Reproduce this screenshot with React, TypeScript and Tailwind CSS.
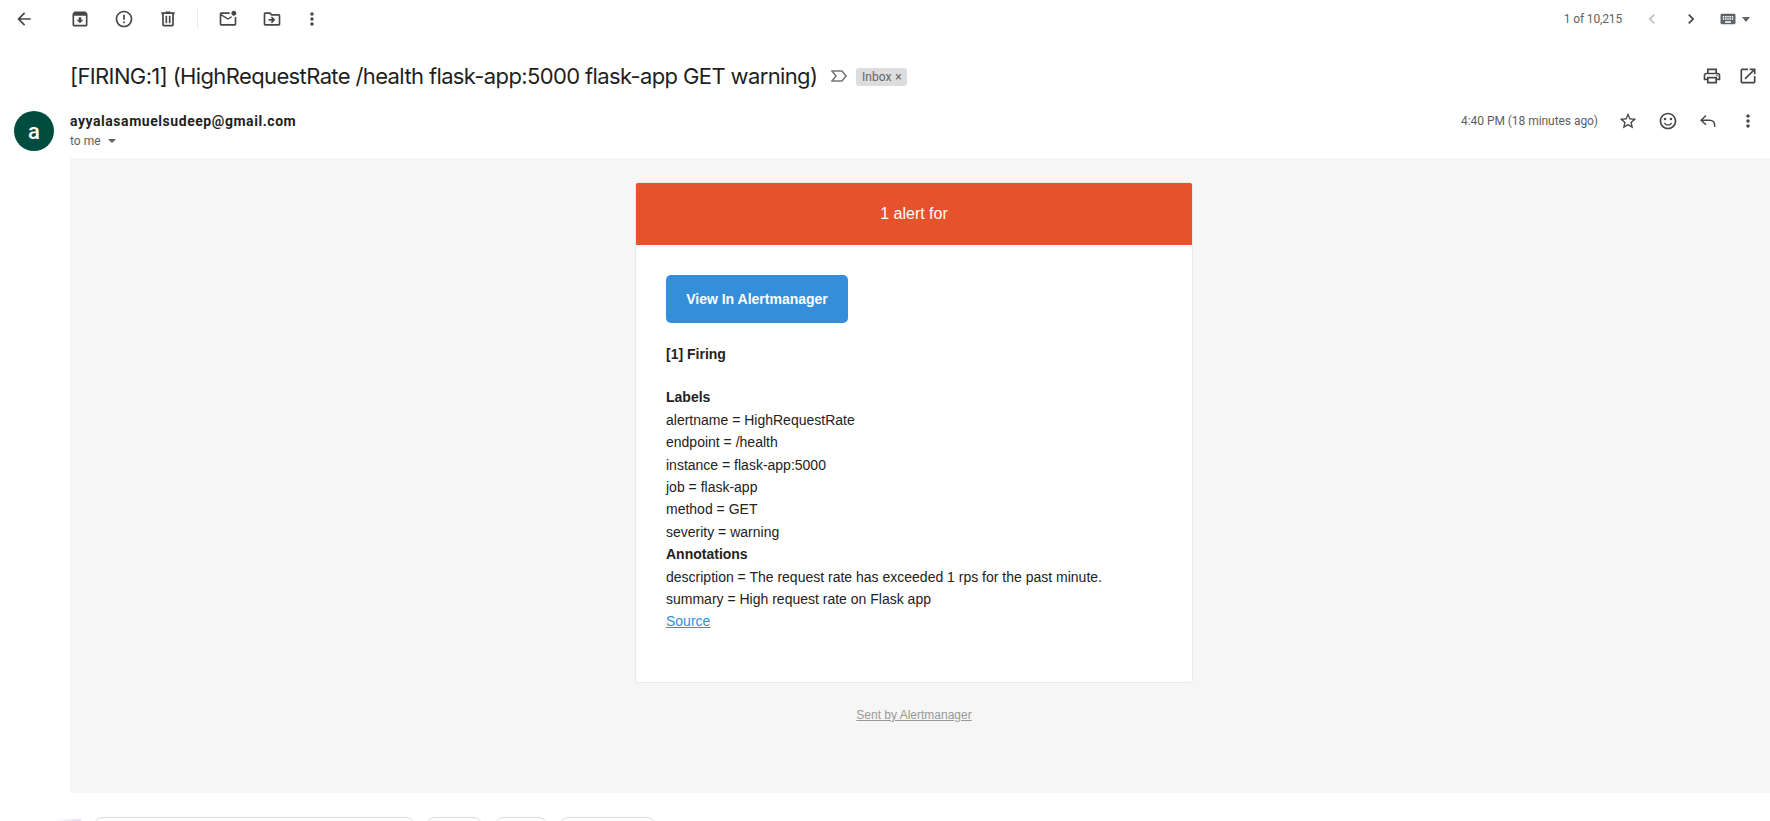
import {
  MdArrowBack,
  MdChevronLeft,
  MdChevronRight,
  MdErrorOutline,
  MdKeyboard,
  MdMoreVert,
  MdOpenInNew,
  MdOutlineDriveFileMove,
  MdOutlineMarkEmailUnread,
  MdOutlinePrint,
  MdOutlineSentimentSatisfied,
  MdStarBorder,
} from "react-icons/md";

const ArchiveIcon = () => (
  <svg viewBox="0 0 24 24" className="h-5 w-5" fill="currentColor">
    <path d="M20.54 5.23l-1.39-1.68C18.88 3.21 18.47 3 18 3H6c-.47 0-.88.21-1.16.55L3.46 5.23C3.17 5.57 3 6.02 3 6.5V19c0 1.1.9 2 2 2h14c1.1 0 2-.9 2-2V6.5c0-.48-.17-.93-.46-1.27zM5 19V8h14v11H5zm8.45-9h-2.9v3H8l4 4 4-4h-2.55z" />
  </svg>
);

const TrashIcon = () => (
  <svg viewBox="0 0 24 24" className="h-5 w-5" fill="currentColor">
    <path d="M15 4V3H9v1H4v2h1v13c0 1.1.9 2 2 2h10c1.1 0 2-.9 2-2V6h1V4h-5zm2 15H7V6h10v13z" />
    <path d="M9 8h2v9H9zm4 0h2v9h-2z" />
  </svg>
);

const ReplyIcon = () => (
  <svg viewBox="0 0 24 24" className="h-5 w-5" fill="none" stroke="currentColor" strokeWidth="1.8">
    <path d="M9.5 5.5 3.8 11l5.7 5.5" />
    <path d="M4 11h10c3.5 0 6 2.5 6 6v2" />
  </svg>
);

const ImportanceIcon = () => (
  <svg viewBox="0 0 16 14" className="h-[14px] w-4" fill="none" stroke="#757575" strokeWidth="1.6">
    <path d="M1 2h10l4 5-4 5H1l4-5z" />
  </svg>
);

const ToolbarButton = ({ children }: { children: React.ReactNode }) => (
  <div className="flex w-11 items-center justify-center text-[#444746]">{children}</div>
);

const labels = [
  "alertname = HighRequestRate",
  "endpoint = /health",
  "instance = flask-app:5000",
  "job = flask-app",
  "method = GET",
  "severity = warning",
];

const annotations = [
  "description = The request rate has exceeded 1 rps for the past minute.",
  "summary = High request rate on Flask app",
];

const App = () => {
  return (
    <div className="h-[821px] w-[1770px] overflow-hidden bg-white font-['Roboto',sans-serif] text-[#1f1f1f]">
      {/* Toolbar */}
      <div className="flex h-[38px] items-center">
        <div className="flex w-12 items-center justify-center text-[#444746]">
          <MdArrowBack className="h-5 w-5" />
        </div>
        <div className="ml-[10px] flex items-center">
          <ToolbarButton>
            <ArchiveIcon />
          </ToolbarButton>
          <ToolbarButton>
            <MdErrorOutline className="h-5 w-5" />
          </ToolbarButton>
          <ToolbarButton>
            <TrashIcon />
          </ToolbarButton>
          <div className="ml-[7px] mr-[8px] h-5 w-px bg-[#e8eaed]" />
          <ToolbarButton>
            <MdOutlineMarkEmailUnread className="h-5 w-5" />
          </ToolbarButton>
          <ToolbarButton>
            <MdOutlineDriveFileMove className="h-5 w-5" />
          </ToolbarButton>
          <div className="flex w-9 items-center justify-center text-[#444746]">
            <MdMoreVert className="h-5 w-5" />
          </div>
        </div>
        <div className="ml-auto flex items-center pr-[20px] text-[#444746]">
          <span className="text-xs tracking-[-0.15px] text-[#5f6368]">1 of 10,215</span>
          <MdChevronLeft className="ml-[20px] h-5 w-5 text-[#bdc1c6]" />
          <MdChevronRight className="ml-[19px] h-5 w-5" />
          <MdKeyboard className="ml-[17px] h-[18px] w-[20px] text-[#5f6368]" />
          <span className="ml-[4px] h-0 w-0 border-x-[4px] border-t-[5px] border-x-transparent border-t-[#5f6368]" />
        </div>
      </div>

      {/* Subject */}
      <div className="mt-[21px] flex h-[34px] items-center pl-[70px] pr-[12px]">
        <h1 className="font-['Inter',sans-serif] text-[22px] font-normal leading-7 tracking-[-0.62px]">
          [FIRING:1] (HighRequestRate /health flask-app:5000 flask-app GET warning)
        </h1>
        <div className="ml-[14px]">
          <ImportanceIcon />
        </div>
        <div className="ml-[9px] mt-[1px] flex h-[18px] w-[51px] items-center justify-center gap-1 rounded-[3px] bg-[#dddddd] text-xs text-[#666666]">
          Inbox <span>×</span>
        </div>
        <div className="ml-auto flex items-center gap-4 text-[#444746]">
          <MdOutlinePrint className="h-5 w-5" />
          <MdOpenInNew className="h-5 w-5" />
        </div>
      </div>

      {/* Sender row */}
      <div className="mt-[4px] flex h-[61px] pl-[14px] pr-[12px]">
        <div className="mt-[14px] flex h-10 w-10 items-center justify-center rounded-full bg-[#004d40] text-[22px] font-medium text-white">
          a
        </div>
        <div className="ml-[16px] mt-[14px]">
          <div className="text-sm font-bold leading-5 tracking-[0.55px] text-[#1f1f1f]">
            ayyalasamuelsudeep@gmail.com
          </div>
          <div className="flex items-center text-xs leading-5 text-[#5e5e5e]">
            to me
            <span className="ml-[7px] h-0 w-0 border-x-[4px] border-t-[4px] border-x-transparent border-t-[#5e5e5e]" />
          </div>
        </div>
        <div className="ml-auto mt-[10px] flex h-[28px] items-center text-[#444746]">
          <span className="text-xs tracking-[-0.05px] text-[#5e5e5e]">4:40 PM (18 minutes ago)</span>
          <MdStarBorder className="ml-[20px] h-5 w-5" />
          <MdOutlineSentimentSatisfied className="ml-[20px] h-5 w-5" />
          <div className="ml-[20px]">
            <ReplyIcon />
          </div>
          <MdMoreVert className="ml-[20px] h-5 w-5" />
        </div>
      </div>

      {/* Message body */}
      <div className="ml-[70px] h-[635px] bg-[#f6f6f6] pt-6 font-['Liberation_Sans',sans-serif] text-sm text-[#222222]">
        <div className="ml-[565px] w-[558px] overflow-hidden rounded-[3px] border border-[#e9e9e9] bg-white">
          <div className="flex h-[62px] items-center justify-center bg-[#e6522c] text-base text-white">1 alert for</div>
          <div className="px-[30px] pb-[49px] pt-[30px] leading-[22.4px]">
            <div className="flex h-[48px] w-[182px] items-center justify-center rounded-[5px] bg-[#348eda] font-bold text-white">
              View In Alertmanager
            </div>
            <div className="mt-[20px] font-bold">[1] Firing</div>
            <div className="mt-[21px] font-bold">Labels</div>
            {labels.map((line) => (
              <div key={line}>{line}</div>
            ))}
            <div className="font-bold">Annotations</div>
            {annotations.map((line) => (
              <div key={line}>{line}</div>
            ))}
            <a className="text-[#348eda] underline">Source</a>
          </div>
        </div>
        <div className="ml-[565px] mt-[24px] w-[558px] text-center text-xs text-[#999999] underline">
          Sent by Alertmanager
        </div>
      </div>

      {/* Reply row, cut off by the window */}
      <div className="mt-6 flex pl-[55px]">
        <div className="mt-[2px] h-[2px] w-[26px] bg-gradient-to-r from-white to-[#e6dcf8]" />
        <div className="ml-[13px] h-6 w-[320px] rounded-lg border border-[#dadce0]" />
        <div className="ml-[13px] h-6 w-[55px] rounded-lg border border-[#dadce0]" />
        <div className="ml-[13px] h-6 w-[52px] rounded-lg border border-[#dadce0]" />
        <div className="ml-[13px] h-6 w-[95px] rounded-lg border border-[#dadce0]" />
      </div>
    </div>
  );
};

export default App;
